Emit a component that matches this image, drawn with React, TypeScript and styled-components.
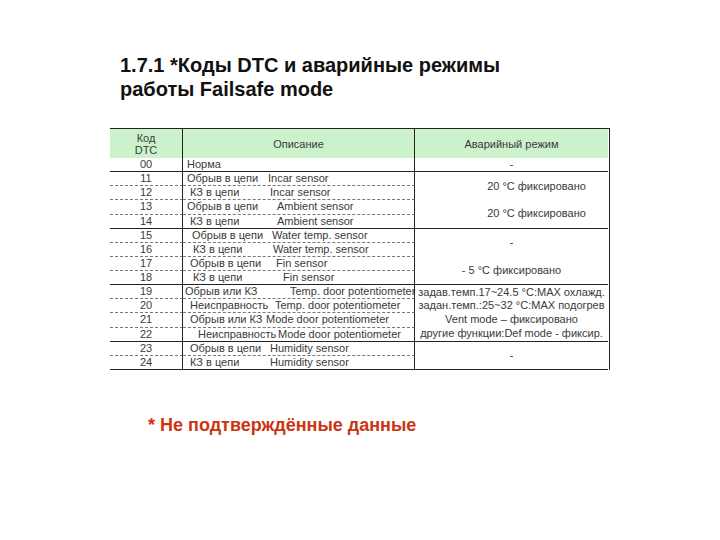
import styled, { createGlobalStyle } from 'styled-components'

interface Row {
  code: string
  fault: string
  sensor: string
  faultX: number
  sensorX: number
  line: 'solid' | 'dashed'
}

interface ModeGroup {
  from: number
  span: number
  shift: number
  lines: string[]
}

const rows: Row[] = [
  { code: '00', fault: 'Норма', sensor: '', faultX: 4, sensorX: 80, line: 'solid' },
  { code: '11', fault: 'Обрыв в цепи', sensor: 'Incar sensor', faultX: 4, sensorX: 85, line: 'dashed' },
  { code: '12', fault: 'КЗ в цепи', sensor: 'Incar sensor', faultX: 7, sensorX: 87, line: 'dashed' },
  { code: '13', fault: 'Обрыв в цепи', sensor: 'Ambient sensor', faultX: 4, sensorX: 94, line: 'dashed' },
  { code: '14', fault: 'КЗ в цепи', sensor: 'Ambient sensor', faultX: 7, sensorX: 94, line: 'solid' },
  { code: '15', fault: 'Обрыв в цепи', sensor: 'Water temp. sensor', faultX: 9, sensorX: 89, line: 'dashed' },
  { code: '16', fault: 'КЗ в цепи', sensor: 'Water temp. sensor', faultX: 10, sensorX: 90, line: 'dashed' },
  { code: '17', fault: 'Обрыв в цепи', sensor: 'Fin sensor', faultX: 7, sensorX: 93, line: 'dashed' },
  { code: '18', fault: 'КЗ в цепи', sensor: 'Fin sensor', faultX: 10, sensorX: 100, line: 'solid' },
  { code: '19', fault: 'Обрыв или КЗ', sensor: 'Temp. door potentiometer', faultX: 2, sensorX: 107, line: 'dashed' },
  { code: '20', fault: 'Неисправность', sensor: 'Temp. door potentiometer', faultX: 7, sensorX: 92, line: 'dashed' },
  { code: '21', fault: 'Обрыв или КЗ', sensor: 'Mode door potentiometer', faultX: 7, sensorX: 83, line: 'dashed' },
  { code: '22', fault: 'Неисправность', sensor: 'Mode door potentiometer', faultX: 15, sensorX: 95, line: 'solid' },
  { code: '23', fault: 'Обрыв в цепи', sensor: 'Humidity sensor', faultX: 7, sensorX: 87, line: 'dashed' },
  { code: '24', fault: 'КЗ в цепи', sensor: 'Humidity sensor', faultX: 7, sensorX: 87, line: 'solid' },
]

const modes: ModeGroup[] = [
  { from: 0, span: 1, shift: 0, lines: ['-'] },
  { from: 1, span: 4, shift: 50, lines: ['20 °C  фиксировано', '20 °C  фиксировано'] },
  { from: 5, span: 4, shift: 0, lines: ['-', '- 5 °C  фиксировано'] },
  {
    from: 9,
    span: 4,
    shift: 0,
    lines: [
      'задав.темп.17~24.5 °C:MAX охлажд.',
      'задан.темп.:25~32 °C:MAX подогрев',
      'Vent mode – фиксировано',
      'другие функции:Def mode - фиксир.',
    ],
  },
  { from: 13, span: 2, shift: 0, lines: ['-'] },
]

const App = () => {
  return (
    <Page>
      <GlobalStyle />
      <Title>
        1.7.1 *Коды DTC и аварийные режимы
        <br />
        работы Failsafe mode
      </Title>
      <Table>
        <HeadCell $col={1}>
          Код
          <br />
          DTC
        </HeadCell>
        <HeadCell $col={2}>Описание</HeadCell>
        <HeadCell $col={3}>Аварийный режим</HeadCell>
        {rows.map((row, index) => (
          <CodeCell key={'c' + row.code} $row={index + 2} $line={row.line}>
            {row.code}
          </CodeCell>
        ))}
        {rows.map((row, index) => (
          <DescCell key={'d' + row.code} $row={index + 2} $line={row.line}>
            <Fault $indent={row.faultX} $width={row.sensorX - row.faultX}>
              {row.fault}
            </Fault>
            <span>{row.sensor}</span>
          </DescCell>
        ))}
        {modes.map((mode) => (
          <ModeCell key={'m' + mode.from} $row={mode.from + 2} $span={mode.span}>
            {mode.lines.map((line, index) => (
              <ModeLine key={index} $shift={mode.shift}>
                {line}
              </ModeLine>
            ))}
          </ModeCell>
        ))}
      </Table>
      <Note>* Не подтверждённые данные</Note>
    </Page>
  )
}

const GlobalStyle = createGlobalStyle`
  body {
    margin: 0;
    background: #ffffff;
  }
`

const Page = styled.div`
  width: 720px;
  height: 540px;
  display: flex;
  flex-direction: column;
  padding: 53px 0 0 110px;
  box-sizing: border-box;
  font-family: 'Liberation Sans', Arial, sans-serif;
`

const Title = styled.div`
  margin-left: 10px;
  font-size: 20px;
  font-weight: bold;
  line-height: 24px;
  color: #111;
`

const Table = styled.div`
  margin-top: 27px;
  width: 499px;
  display: grid;
  grid-template-columns: 73px 232px 193px;
  grid-template-rows: 29px repeat(15, 14.13px);
  border-top: 1px solid #222;
  border-right: 1px solid #222;
  font-size: 11px;
  color: #3a3a3a;
`

const HeadCell = styled.div<{ $col: number }>`
  grid-column: ${(p) => p.$col};
  grid-row: 1;
  display: flex;
  align-items: center;
  justify-content: center;
  text-align: center;
  line-height: 12px;
  background: #ccf2cc;
  border-right: ${(p) => (p.$col < 3 ? '1px solid #222' : 'none')};
`

const CodeCell = styled.div<{ $row: number; $line: string }>`
  grid-column: 1;
  grid-row: ${(p) => p.$row};
  display: flex;
  align-items: center;
  justify-content: center;
  border-right: 1px solid #222;
  border-bottom: 1px ${(p) => p.$line} ${(p) => (p.$line === 'solid' ? '#222' : '#777')};
  line-height: 1;
`

const DescCell = styled.div<{ $row: number; $line: string }>`
  grid-column: 2;
  grid-row: ${(p) => p.$row};
  display: flex;
  align-items: center;
  white-space: nowrap;
  border-right: 1px solid #222;
  border-bottom: 1px ${(p) => p.$line} ${(p) => (p.$line === 'solid' ? '#222' : '#777')};
  line-height: 1;
`

const Fault = styled.span<{ $indent: number; $width: number }>`
  padding-left: ${(p) => p.$indent}px;
  width: ${(p) => p.$width}px;
  flex-shrink: 0;
`

const ModeCell = styled.div<{ $row: number; $span: number }>`
  grid-column: 3;
  grid-row: ${(p) => p.$row} / span ${(p) => p.$span};
  display: flex;
  flex-direction: column;
  border-bottom: 1px solid #222;
`

const ModeLine = styled.div<{ $shift: number }>`
  flex: 1;
  display: flex;
  align-items: center;
  justify-content: center;
  padding-left: ${(p) => p.$shift}px;
  white-space: nowrap;
  line-height: 1;
`

const Note = styled.div`
  margin: 45px 0 0 38px;
  font-size: 18px;
  font-weight: bold;
  color: #cc3311;
`

export default App
